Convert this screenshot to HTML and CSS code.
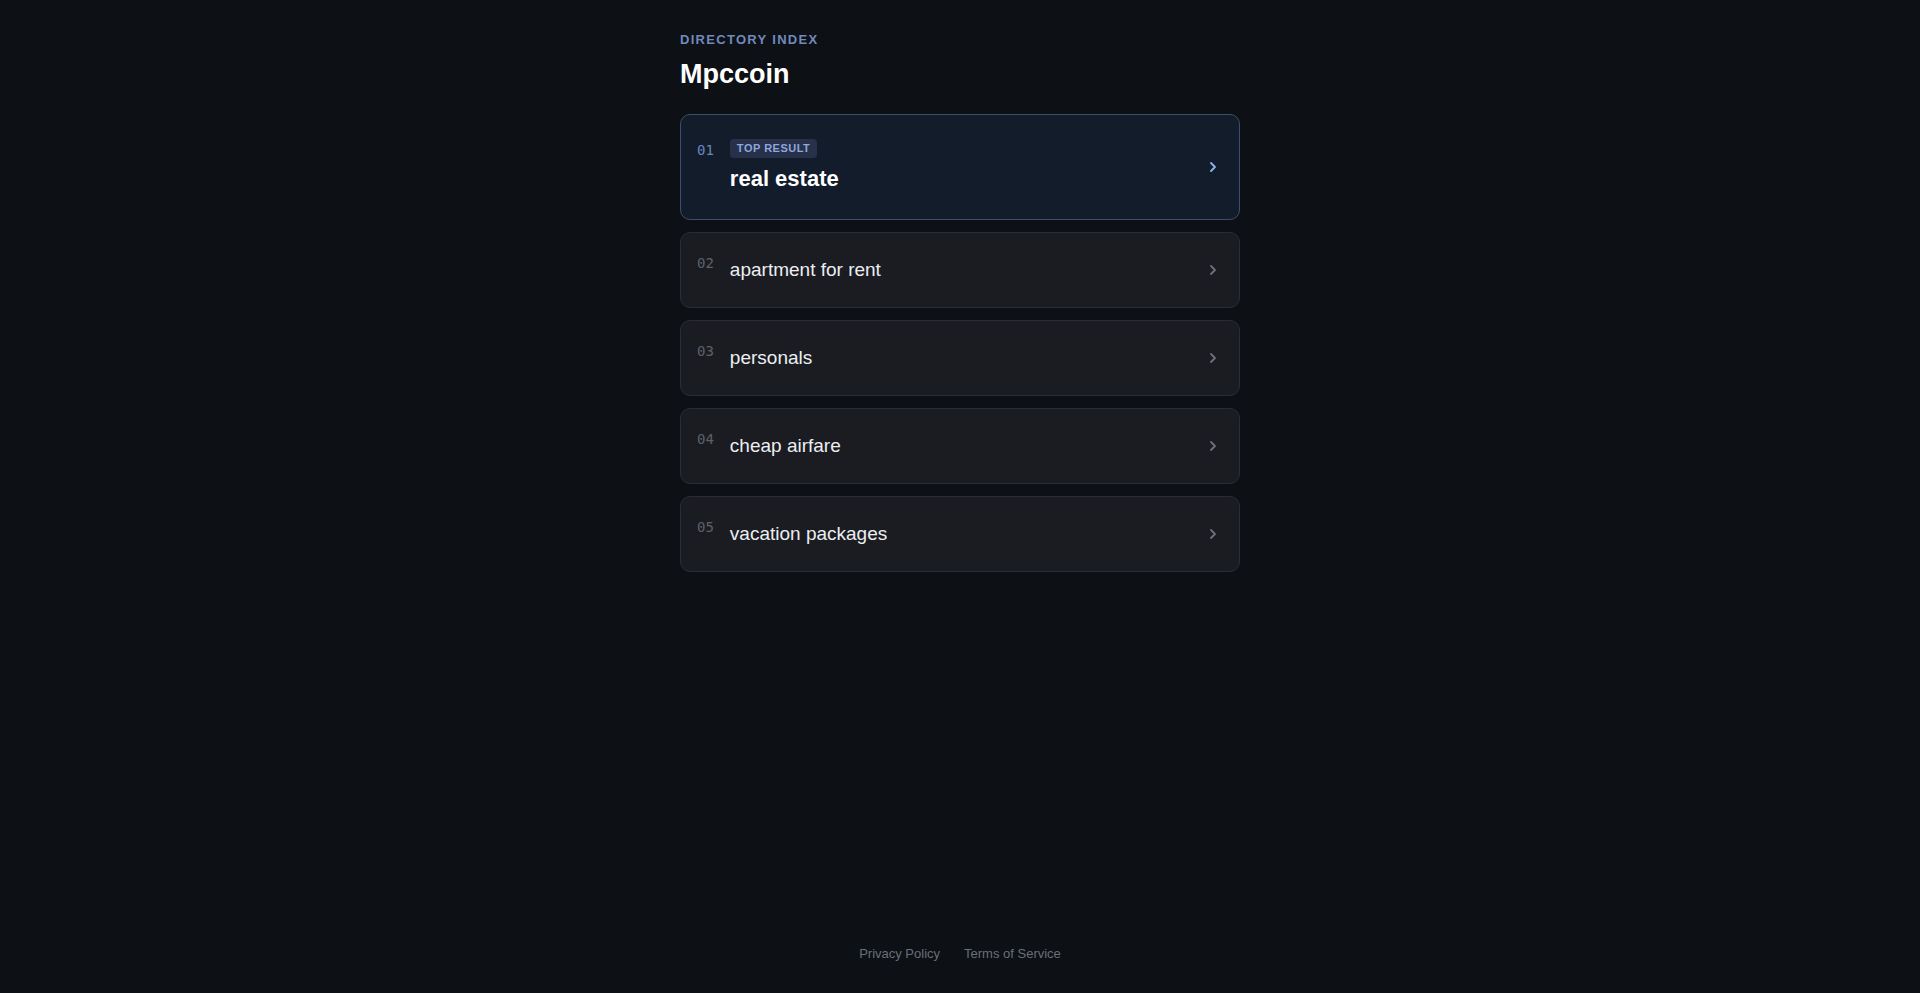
FILE: index.html
```html
<!DOCTYPE html>
<html lang="en">
<head>
    <meta charset="UTF-8">
    <meta name="viewport" content="width=device-width, initial-scale=1.0">
    <title>Mpccoin</title>
    <link rel="stylesheet" href="styles.css">
</head>
<body>
    <main class="page">
        <header class="head">
            <p class="eyebrow">Directory Index</p>
            <h1 class="title">Mpccoin</h1>
        </header>

        <ul class="results">
            <li>
                <a class="result result--top" href="#">
                    <span class="result-num">01</span>
                    <span class="result-body">
                        <span class="badge">Top Result</span>
                        <span class="result-label">real estate</span>
                    </span>
                    <svg class="chevron" viewBox="0 0 16 16" width="16" height="16"><path d="M6 4l4 4-4 4"/></svg>
                </a>
            </li>
            <li>
                <a class="result" href="#">
                    <span class="result-num">02</span>
                    <span class="result-body"><span class="result-label">apartment for rent</span></span>
                    <svg class="chevron" viewBox="0 0 16 16" width="16" height="16"><path d="M6 4l4 4-4 4"/></svg>
                </a>
            </li>
            <li>
                <a class="result" href="#">
                    <span class="result-num">03</span>
                    <span class="result-body"><span class="result-label">personals</span></span>
                    <svg class="chevron" viewBox="0 0 16 16" width="16" height="16"><path d="M6 4l4 4-4 4"/></svg>
                </a>
            </li>
            <li>
                <a class="result" href="#">
                    <span class="result-num">04</span>
                    <span class="result-body"><span class="result-label">cheap airfare</span></span>
                    <svg class="chevron" viewBox="0 0 16 16" width="16" height="16"><path d="M6 4l4 4-4 4"/></svg>
                </a>
            </li>
            <li>
                <a class="result" href="#">
                    <span class="result-num">05</span>
                    <span class="result-body"><span class="result-label">vacation packages</span></span>
                    <svg class="chevron" viewBox="0 0 16 16" width="16" height="16"><path d="M6 4l4 4-4 4"/></svg>
                </a>
            </li>
        </ul>
    </main>

    <footer class="foot">
        <a href="#">Privacy Policy</a>
        <a href="#">Terms of Service</a>
    </footer>
</body>
</html>
```

FILE: styles.css
```css
* {
    box-sizing: border-box;
}
body {
    margin: 0;
    min-height: 100vh;
    display: flex;
    flex-direction: column;
    background: #0d1014;
    color: #f0f1f3;
    font-family: "Liberation Sans", Arial, sans-serif;
}
a {
    text-decoration: none;
    color: inherit;
}

.page {
    width: 560px;
    margin: 0 auto;
    padding-top: 32px;
    flex: 1;
}
.eyebrow {
    margin: 0 0 10px 0;
    font-size: 13px;
    line-height: 1.2;
    font-weight: bold;
    letter-spacing: 1.3px;
    text-transform: uppercase;
    color: #7189bd;
}
.title {
    margin: 0 0 24px 0;
    font-size: 27px;
    line-height: 1.2;
    font-weight: bold;
    color: #ffffff;
}

.results {
    list-style: none;
    margin: 0;
    padding: 0;
    display: flex;
    flex-direction: column;
    gap: 12px;
}
.result {
    display: flex;
    align-items: center;
    gap: 16px;
    padding: 24px 16px;
    background: #1a1c22;
    border: 1px solid #2a2d35;
    border-radius: 10px;
}
.result-num {
    align-self: flex-start;
    margin-top: -1px;
    font-family: "DejaVu Sans Mono", monospace;
    font-size: 14px;
    line-height: 14px;
    color: #5c6169;
}
.result-body {
    flex: 1;
    display: flex;
    flex-direction: column;
    align-items: flex-start;
}
.result-label {
    font-size: 19px;
    line-height: 26px;
    color: #eceef1;
}
.chevron {
    margin-right: 2px;
    fill: none;
    stroke: #6b7079;
    stroke-width: 1.8;
    stroke-linecap: round;
    stroke-linejoin: round;
}

/* highlighted first entry */
.result--top {
    background: #121c2b;
    border-color: #3d4d6e;
}
.result--top .result-num {
    margin-top: 4px;
    color: #6a86bf;
}
.result--top .result-label {
    font-size: 22px;
    line-height: 1.4;
    font-weight: bold;
    color: #ffffff;
}
.result--top .chevron {
    stroke: #93b3ec;
}
.badge {
    margin-bottom: 6px;
    padding: 0 7px;
    height: 19px;
    line-height: 19px;
    border-radius: 4px;
    background: #27314a;
    color: #8ea7dd;
    font-size: 11px;
    font-weight: bold;
    letter-spacing: 0.5px;
    text-transform: uppercase;
}

.foot {
    display: flex;
    justify-content: center;
    gap: 24px;
    padding: 24px 0 30px 0;
    font-size: 13px;
    line-height: 1.5;
}
.foot a {
    color: #6a6f77;
}
```
